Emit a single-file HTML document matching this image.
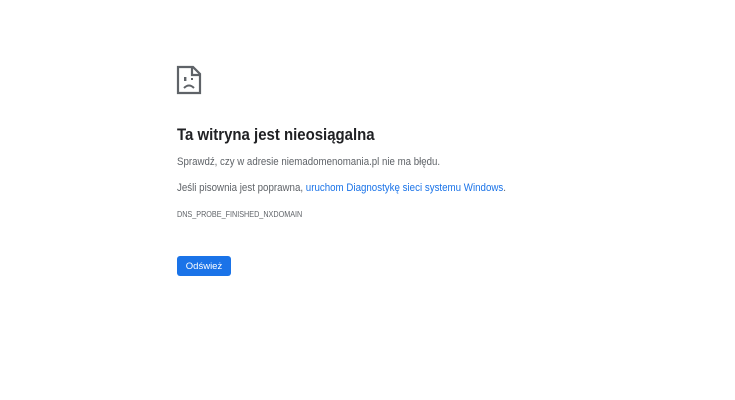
<!DOCTYPE html>
<html><head><meta charset="utf-8"><style>
html,body{margin:0;padding:0;background:#fff;width:735px;height:400px;overflow:hidden;font-family:"Liberation Sans",sans-serif}
.t{position:absolute;left:177px;white-space:nowrap;transform-origin:left top}
#h{top:125px;font-size:17px;font-weight:bold;color:#202124;transform:scaleX(0.88)}
#p1{top:156px;font-size:11px;color:#5f6368;transform:scaleX(0.88)}
#p2{top:182px;font-size:11px;color:#5f6368;transform:scaleX(0.885)}
#p2 a{color:#1a73e8;text-decoration:none}
#c{top:209px;font-size:8.5px;color:#5f6368;transform:scaleX(0.85)}
#b{position:absolute;left:177px;top:256px;width:54px;height:20px;background:#1a73e8;border-radius:3px;color:#fff;font-size:9.5px;line-height:21px;text-align:center}
</style></head><body>
<svg style="position:absolute;left:176px;top:65px" width="27" height="30" viewBox="0 0 27 30">
<path d="M2 2 H17 L24 9 V28 H2 Z" fill="none" stroke="#5f6368" stroke-width="2.2"/>
<path d="M16 2 V10 H24" fill="none" stroke="#5f6368" stroke-width="2.2"/>
<rect x="8" y="12" width="2.4" height="4" fill="#5f6368"/>
<rect x="15" y="13" width="2" height="2" fill="#5f6368"/>
<path d="M8 23 Q13 18 18 23" fill="none" stroke="#5f6368" stroke-width="2"/>
</svg>
<div class="t" id="h">Ta witryna jest nieosiągalna</div>
<div class="t" id="p1">Sprawdź, czy w adresie niemadomenomania.pl nie ma błędu.</div>
<div class="t" id="p2">Jeśli pisownia jest poprawna, <a>uruchom Diagnostykę sieci systemu Windows</a>.</div>
<div class="t" id="c">DNS_PROBE_FINISHED_NXDOMAIN</div>
<div id="b">Odśwież</div>
</body></html>
